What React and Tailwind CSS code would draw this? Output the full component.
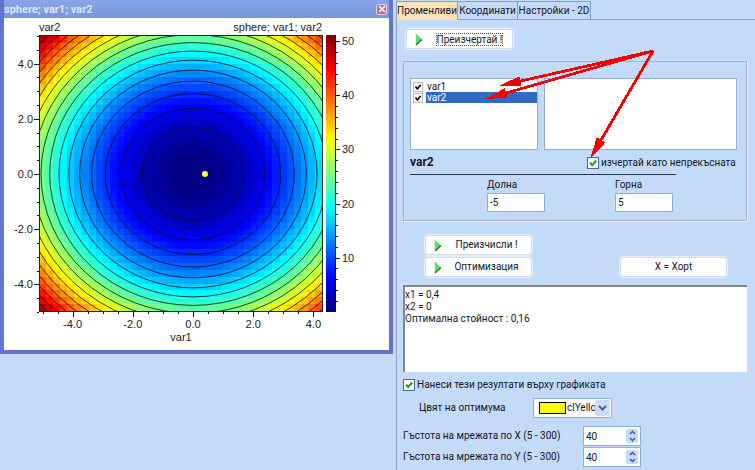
import React from "react";

const UI = "font-[Roboto,'DejaVu_Sans_Condensed',sans-serif]";

const PLOT = { x: 39, y: 36, w: 283, h: 275, cx: 193, cy: 174, ux: 30.1, uy: 27.6 };
const MAX = 51;
const CELLS = 40;

function jet(value) {
  const t = Math.min(1, Math.max(0, value / MAX));
  const band = (c) => Math.round(255 * Math.min(1, Math.max(0, 1.5 - Math.abs(4 * t - c))));
  return `rgb(${band(3)},${band(2)},${band(1)})`;
}

function Heatmap() {
  const cells = [];
  const cw = PLOT.w / CELLS;
  const ch = PLOT.h / CELLS;
  for (let i = 0; i < CELLS; i++) {
    for (let j = 0; j < CELLS; j++) {
      const x = PLOT.x + i * cw;
      const y = PLOT.y + j * ch;
      const vx = (x + cw / 2 - PLOT.cx) / PLOT.ux;
      const vy = (y + ch / 2 - PLOT.cy) / PLOT.uy;
      cells.push(
        <rect key={`${i}-${j}`} x={x} y={y} width={cw + 0.5} height={ch + 0.5} fill={jet(vx * vx + vy * vy)} />
      );
    }
  }
  return <g shapeRendering="crispEdges">{cells}</g>;
}

function Contours() {
  return Array.from({ length: 17 }, (_, k) => {
    const r = Math.sqrt(((k + 1) * MAX) / 18);
    return (
      <ellipse key={k} cx={PLOT.cx} cy={PLOT.cy} rx={r * PLOT.ux} ry={r * PLOT.uy} fill="none" stroke="#000c20" strokeWidth="0.8" />
    );
  });
}

function Plot() {
  const right = PLOT.x + PLOT.w;
  const bottom = PLOT.y + PLOT.h;
  const xTicks = Array.from({ length: 19 }, (_, i) => -5 + i * 0.5);
  const yTicks = Array.from({ length: 21 }, (_, i) => -5 + i * 0.5);
  const barTicks = Array.from({ length: 25 }, (_, i) => 2 + i * 2);
  const barY = (v) => Math.round(bottom + 0.7 - v * 5.41);
  return (
    <svg viewBox="4 18 385 332" className="block w-full font-['Liberation_Sans',Arial,sans-serif] text-[11px]" role="img" aria-label="sphere; var1; var2">
      <defs>
        <clipPath id="area">
          <rect x={PLOT.x} y={PLOT.y} width={PLOT.w} height={PLOT.h} />
        </clipPath>
        <linearGradient id="bar" x1="0" y1="1" x2="0" y2="0">
          {Array.from({ length: 33 }, (_, i) => (
            <stop key={i} offset={i / 32} stopColor={jet((i / 32) * MAX)} />
          ))}
        </linearGradient>
      </defs>
      <g clipPath="url(#area)">
        <Heatmap />
        <Contours />
      </g>
      <circle cx="205" cy="174" r="3" fill="#ffff4a" />
      <rect x={PLOT.x + 0.5} y={PLOT.y - 0.5} width={right - PLOT.x} height={PLOT.h + 1} fill="none" stroke="#222" />
      <rect x="326" y="35" width="10" height="277" fill="url(#bar)" />
      <g stroke="#111" shapeRendering="crispEdges">
        {xTicks.map((v) => {
          const x = Math.round(PLOT.cx + v * PLOT.ux) + 0.5;
          return <line key={v} x1={x} x2={x} y1={bottom} y2={bottom + (v % 2 === 0 ? 6 : 3)} />;
        })}
        {yTicks.map((v) => {
          const y = Math.round(PLOT.cy - v * PLOT.uy) + 0.5;
          return <line key={v} x1={PLOT.x - (v % 2 === 0 ? 5 : 2)} x2={PLOT.x} y1={y} y2={y} />;
        })}
        <line x1="335.5" x2="335.5" y1="35" y2="312" />
        {barTicks.map((v) => (
          <line key={v} x1="335" x2={v % 10 === 0 ? 340 : 338} y1={barY(v) + 0.5} y2={barY(v) + 0.5} />
        ))}
      </g>
      <g fill="#222">
        <text x="39" y="31">var2</text>
        <text x="322" y="31" textAnchor="end">sphere; var1; var2</text>
        {[4, 2, 0, -2, -4].map((v) => (
          <text key={v} x="33" y={PLOT.cy - v * PLOT.uy + 4} textAnchor="end">{v.toFixed(1)}</text>
        ))}
        {[-4, -2, 0, 2, 4].map((v) => (
          <text key={v} x={PLOT.cx + v * PLOT.ux} y="328" textAnchor="middle">{v.toFixed(1)}</text>
        ))}
        {[10, 20, 30, 40, 50].map((v) => (
          <text key={v} x="342" y={barY(v) + 4}>{v}</text>
        ))}
        <text x="181" y="341" textAnchor="middle">var1</text>
      </g>
    </svg>
  );
}

function PlotWindow() {
  return (
    <section className="w-[393px] shrink-0 border-r-4 border-b-4 border-l-4 border-[#6274cd] bg-white">
      <header className="flex h-[18px] items-center justify-between bg-linear-to-b from-[#8aa6e8] to-[#7795de]">
        <h1 className="pt-px text-[11px] leading-4 font-bold text-[#dce7fb]">sphere; var1; var2</h1>
        <button aria-label="Close" className="mr-[2px] flex h-[11px] w-[11px] items-center justify-center rounded-[2px] border border-[#e3d5e6] bg-[#bd6b86]">
          <svg viewBox="0 0 8 8" className="h-2 w-2" stroke="#fff" strokeWidth="1.7">
            <path d="M1 1l6 6M7 1l-6 6" />
          </svg>
        </button>
      </header>
      <Plot />
    </section>
  );
}

function PushButton({ children, play = false, focused = false, className = "" }) {
  return (
    <button className={`flex h-[20px] w-[107px] shrink-0 items-center rounded-[3px] border border-[#d3dbe6] bg-white px-[8px] outline-1 outline-[#e3edfb] ${className}`}>
      {play && (
        <svg viewBox="0 0 8 13" className="h-[13px] w-2 shrink-0">
          <path d="M1 1v11l6-5.500z" fill="#55e06c" stroke="#8ade95" strokeWidth=".6" />
          <path d="M1 12l6-5.500" stroke="#256b30" strokeWidth="1.2" />
        </svg>
      )}
      <span className="flex flex-1 justify-center whitespace-nowrap">
        <span className={focused ? "ml-3 border border-dotted border-[#555] leading-[11px]" : play ? "ml-2" : ""}>{children}</span>
      </span>
    </button>
  );
}

function Tick({ label, color = "#2a9a2a", box = "h-3 w-3 border-[#3b6c96]", className = "" }) {
  return (
    <label className={`flex items-center whitespace-nowrap ${className}`}>
      <span className="relative flex shrink-0">
        <input type="checkbox" defaultChecked className={`peer appearance-none border bg-white ${box}`} />
        <svg viewBox="0 0 12 12" className="pointer-events-none absolute inset-0 hidden h-full w-full peer-checked:block" fill="none" stroke={color} strokeWidth="2">
          <path d="M3 5.500l2.200 2.700L9.200 3.500" />
        </svg>
      </span>
      {label}
    </label>
  );
}

function Bound({ id, label, value }) {
  return (
    <div className="flex w-[58px] flex-col">
      <label htmlFor={id} className="leading-4">{label}</label>
      <input id={id} defaultValue={value} className="h-[19px] w-full border border-[#8db0d8] bg-white px-[2px]" />
    </div>
  );
}

function Spin({ id, label }) {
  return (
    <div className="flex h-5 items-center">
      <label htmlFor={id} className="w-[180px] whitespace-nowrap">{label}</label>
      <div className="flex h-5 w-[58px] items-center border border-[#8db0d8] bg-white px-[2px]">
        <input id={id} defaultValue="40" className="h-full w-0 flex-1 bg-transparent outline-none" />
        <div className="flex w-3 flex-col rounded-[2px] bg-[#c9d9fb]">
          {["Up", "Down"].map((d) => (
            <button key={d} aria-label={`${label} ${d}`} className="flex h-[7px] items-center justify-center">
              <svg viewBox="0 0 7 5" className="h-[5px] w-[7px]" fill="none" stroke="#46618f" strokeWidth="1.6">
                <path d={d === "Up" ? "M1 4l2.500-2.500L6 4" : "M1 1l2.500 2.500L6 1"} />
              </svg>
            </button>
          ))}
        </div>
      </div>
    </div>
  );
}

function Arrow({ from, to }) {
  const a = Math.atan2(from[1] - to[1], from[0] - to[0]);
  const p = (len, off) => `${to[0] + len * Math.cos(a) - off * Math.sin(a)},${to[1] + len * Math.sin(a) + off * Math.cos(a)}`;
  return (
    <g>
      <line x1={from[0]} y1={from[1]} x2={to[0] + 12 * Math.cos(a)} y2={to[1] + 12 * Math.sin(a)} stroke="#f40000" strokeWidth="2.800" />
      <polygon points={`${to[0]},${to[1]} ${p(22, 5)} ${p(22, -5)}`} fill="#f40000" />
    </g>
  );
}

function Annotations() {
  return (
    <svg className="pointer-events-none absolute top-0 left-0 h-[180px] w-[290px]" viewBox="397 0 290 180" shapeRendering="crispEdges">
      <Arrow from={[653, 51]} to={[499, 86]} />
      <Arrow from={[653, 51]} to={[485, 99]} />
      <Arrow from={[653, 51]} to={[590, 159]} />
    </svg>
  );
}

function Tabs() {
  const tab = "h-[18px] border-t border-r border-[#8c9fbd] text-center whitespace-nowrap";
  return (
    <nav role="tablist" className="flex">
      <button role="tab" aria-selected="true" className={`${tab} h-[19px] w-[61px] bg-[#fbe2b9]`}>Променливи</button>
      <div className="flex flex-1 border-b border-[#8fa3c2]">
        <button role="tab" aria-selected="false" className={`${tab} w-[60px]`}>Координати</button>
        <button role="tab" aria-selected="false" className={`${tab} w-[73px]`}>Настройки - 2D</button>
      </div>
    </nav>
  );
}

function VariablesGroup() {
  const item = "h-[11px] pl-[2px] leading-[11px]";
  const itemBox = "h-[10px] w-[10px] border-[#b9b9b9]";
  return (
    <section className="mt-3 mr-2 border border-[#9fb4cf] px-[6px] pt-4 pb-2 shadow-[1px_1px_0_#edf4ff]">
      <div className="flex h-[72px] gap-[6px] pr-[3px]">
        <ul className="w-[128px] shrink-0 border border-[#93b0d2] bg-white pt-[2px]">
          <li>
            <Tick label={<span className="ml-[3px] flex-1 px-px">var1</span>} color="#000" box={itemBox} className={item} />
          </li>
          <li>
            <Tick label={<span className="ml-[3px] flex-1 bg-[#316ac5] px-px text-white">var2</span>} color="#000" box={itemBox} className={item} />
          </li>
        </ul>
        <div className="flex-1 border border-[#93b0d2] bg-white" />
      </div>
      <div className="flex h-6 items-center">
        <h2 className="w-[177px] shrink-0 text-xs font-bold">var2</h2>
        <Tick label={<span className="ml-[2px]">изчертай като непрекъсната</span>} className="pt-[2px]" />
      </div>
      <hr className="mr-[64px] border-[#26344f]" />
      <div className="ml-[77px] flex gap-[70px] pt-[2px]">
        <Bound id="low" label="Долна" value="-5" />
        <Bound id="high" label="Горна" value="5" />
      </div>
    </section>
  );
}

export default function App() {
  return (
    <div className={`flex min-h-screen items-start overflow-hidden bg-[#c4daf9] text-[10px] leading-3 text-[#101828] ${UI}`}>
      <PlotWindow />
      <main className="relative ml-[3px] min-h-screen min-w-0 flex-1 border-l border-[#8ea3c8] pt-px">
        <Tabs />
        <div className="pl-[6px]">
          <PushButton play focused className="mt-[9px] ml-[3px]">Преизчертай !</PushButton>
          <VariablesGroup />
          <div className="mt-[14px] mr-7 ml-[22px] flex items-end justify-between">
            <div className="flex flex-col gap-[2px]">
              <PushButton play>Преизчисли !</PushButton>
              <PushButton play>Оптимизация</PushButton>
            </div>
            <PushButton className="justify-center">X = Xopt</PushButton>
          </div>
          <div className="mt-2 mr-2">
            <textarea
              aria-label="Резултати"
              className="block h-[87px] w-full resize-none border-t-2 border-l-2 border-[#85878c] bg-white pt-[2px] leading-3"
              defaultValue={"x1 = 0,4\nx2 = 0\nОптимална стойност : 0,16"}
            />
          </div>
          <Tick label={<span className="ml-[2px]">Нанеси тези резултати върху графиката</span>} className="mt-[7px]" />
          <div className="mt-[7px] ml-4 flex items-center">
            <label htmlFor="color" className="w-[114px]">Цвят на оптимума</label>
            <div className="relative h-5 w-[79px] border border-[#8db0d8] bg-white">
              <select id="color" className="h-full w-full appearance-none bg-transparent pl-[33px]">
                <option>clYellow</option>
              </select>
              <span className="pointer-events-none absolute top-[3px] left-[5px] h-3 w-[27px] border border-black bg-[#ffff00]" />
              <span className="pointer-events-none absolute top-px right-px flex h-4 w-[15px] items-center justify-center rounded-[2px] bg-[#cbdafb]">
                <svg viewBox="0 0 9 6" className="h-[6px] w-[9px]" fill="none" stroke="#46618f" strokeWidth="2">
                  <path d="M1 1l3.500 3.500L8 1" />
                </svg>
              </span>
            </div>
          </div>
          <div className="mt-2 flex flex-col gap-px">
            <Spin id="gx" label="Гъстота на мрежата по X (5 - 300)" />
            <Spin id="gy" label="Гъстота на мрежата по Y (5 - 300)" />
          </div>
        </div>
        <Annotations />
      </main>
    </div>
  );
}
